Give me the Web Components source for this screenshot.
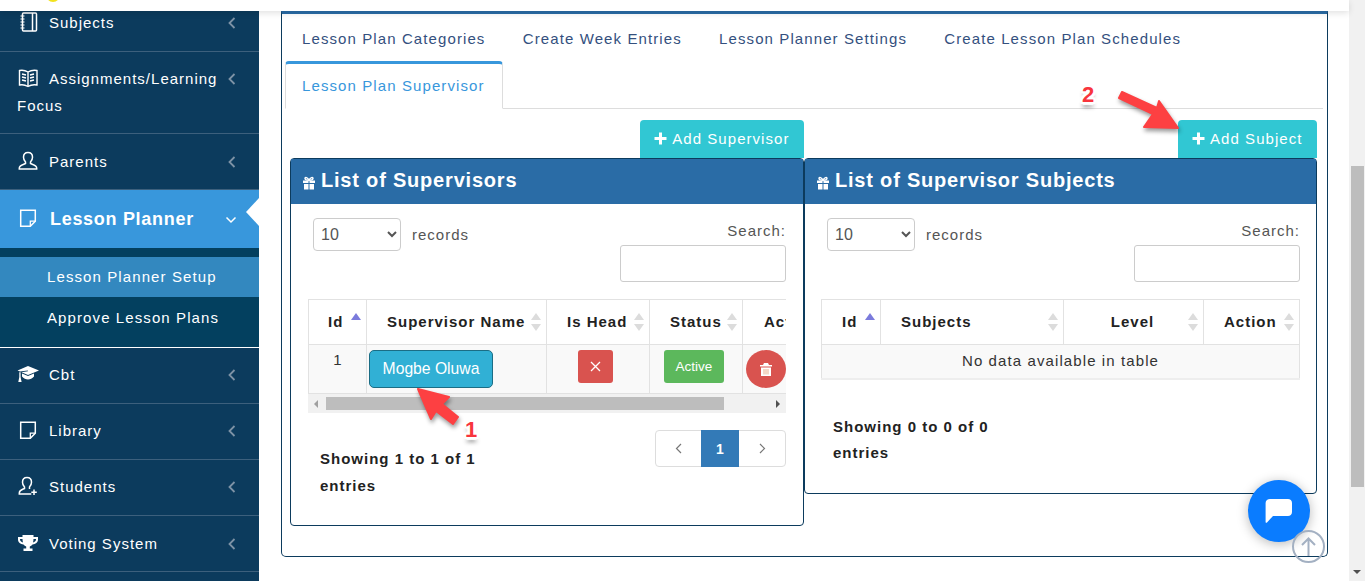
<!DOCTYPE html>
<html>
<head>
<meta charset="utf-8">
<title>Lesson Plan Supervisor</title>
<style>
    html, body { margin: 0; height: 581px; overflow: hidden; background: #fff; }
    body { font-family: "Liberation Sans", Arial, sans-serif; }
</style>
</head>
<body>
<lp-app>
    <side-bar slot="side">
        <side-item icon="notebook" first style="--pt: 13px; --pb: 15px">Subjects</side-item>
        <side-item icon="book" style="--pt: 13px">Assignments/Learning Focus</side-item>
        <side-item icon="user">Parents</side-item>
        <side-item icon="note" active>Lesson Planner</side-item>
        <side-sub>
            <a class="on">Lesson Planner Setup</a>
            <a>Approve Lesson Plans</a>
        </side-sub>
        <side-item icon="cap" style="--pt: 13px; --pb: 15px">Cbt</side-item>
        <side-item icon="note" style="--pt: 13px; --pb: 15px">Library</side-item>
        <side-item icon="useradd" style="--pt: 13px; --pb: 15px">Students</side-item>
        <side-item icon="trophy">Voting System</side-item>
    </side-bar>
    <plan-panel>
        <tab-strip slot="tabs"></tab-strip>
        <div slot="left">
            <add-button>Add Supervisor</add-button>
            <list-box heading="List of Supervisors">
                <dt-controls></dt-controls>
                <supervisor-table></supervisor-table>
                <table-footer info="Showing 1 to 1 of 1 entries" pager></table-footer>
            </list-box>
        </div>
        <div slot="right">
            <add-button>Add Subject</add-button>
            <list-box heading="List of Supervisor Subjects" narrow>
                <dt-controls style="--sel-left: 6px"></dt-controls>
                <subject-table></subject-table>
                <table-footer info="Showing 0 to 0 of 0 entries"></table-footer>
            </list-box>
        </div>
    </plan-panel>
</lp-app>

<script>
const ICONS = {
    notebook: `<svg width="22" height="20" viewBox="0 0 22 20" fill="none" stroke="#fff" stroke-width="1.5"><rect x="5.5" y="1" width="14" height="18" rx="1"/><path d="M15.500 1v18"/><path d="M3.500 4h4M3.500 7h4M3.500 10h4M3.500 13h4M3.500 16h4" stroke-width="1.2"/></svg>`,
    book: `<svg width="22" height="20" viewBox="0 0 22 20" fill="none" stroke="#fff" stroke-width="1.4"><path d="M11 4C8.500 2.500 5 2 2.500 2.500V17C5 16.500 8.500 17 11 18.500 13.500 17 17 16.500 20 17V2.500C17 2 13.500 2.500 11 4ZM11 4v14.500"/><path d="M5 6l4 1M5 9l4 1M5 12l4 1M13 7l4-1M13 10l4-1M13 13l4-1" stroke-width="1.300"/></svg>`,
    user: `<svg width="22" height="20" viewBox="0 0 22 20" fill="none" stroke="#fff" stroke-width="1.500"><path d="M11 1.500c-3 0-4.500 2.200-4.500 4.800 0 2.200 1 3.700 2 4.700v1.500c-2 1-6.200 1.600-6.200 4.500v1h17.400v-1c0-2.900-4.200-3.500-6.200-4.500V11c1-1 2-2.500 2-4.700 0-2.600-1.500-4.800-4.500-4.800z"/></svg>`,
    useradd: `<svg width="22" height="20" viewBox="0 0 22 20" fill="none" stroke="#fff" stroke-width="1.500"><path d="M10 1.500c-3 0-4.500 2.200-4.500 4.800 0 2.200 1 3.700 2 4.700v1.500c-2 1-5.200 1.600-5.200 4.500v1h12"/><path d="M10 1.500c3 0 4.500 2.200 4.500 4.800 0 2.200-1 3.700-2 4.700v2"/><path d="M17 13.500v5.500M14.300 16.300h5.500"/></svg>`,
    note: `<svg width="22" height="20" viewBox="0 0 22 20" fill="none" stroke="#fff" stroke-width="1.500"><path d="M3.700 2.200h14.600v11l-5 5H3.700z"/><path d="M18.300 13.200h-5v5" stroke-width="1.300"/></svg>`,
    cap: `<svg width="22" height="18" viewBox="0 0 22 18" fill="#fff"><path d="M11 1 22 5.500 11 10 4.500 7.300l6.500-1-.2-.9L3 6.500.5 5.500z"/><path d="M5 8.500v3c1.500 2 4 3 6 3s4.500-1 6-3v-3l-6 2.500z"/><path d="M2.300 7.200h1.300v4.800l1 5H1.300l1-5z"/></svg>`,
    trophy: `<svg width="22" height="18" viewBox="0 0 22 18" fill="#fff"><path d="M5.500 1h11v2H21v2.500c0 3-2.500 4.700-5.500 5-.8 1-1.700 1.600-2.700 1.900v2.100h2.700V17H6.500v-2.500h2.700v-2.100c-1-.3-1.900-.9-2.700-1.900C3.500 10.200 1 8.500 1 5.500V3h4.500zM3 5v.6c0 1.500 1.200 2.500 3 2.900C5.700 7.400 5.500 6.200 5.500 5zm13.500 0c0 1.200-.2 2.400-.5 3.500 1.800-.4 3-1.400 3-2.900V5z"/></svg>`
};

class SideBar extends HTMLElement {
    constructor() {
        super();
        this.attachShadow({ mode: 'open' }).innerHTML = `
        <style>
            :host { display: block; width: 259px; height: 100%; background: #0c3b5d; overflow: hidden; }
        </style>
        <slot></slot>`;
    }
}

class SideItem extends HTMLElement {
    constructor() {
        super();
        const active = this.hasAttribute('active');
        const chevron = active
            ? `<svg width="12" height="8" viewBox="0 0 12 8" fill="none" stroke="#fff" stroke-width="1.500"><path d="M1.500 1.500 6 6l4.500-4.500"/></svg>`
            : `<svg width="8" height="12" viewBox="0 0 8 12" fill="none" stroke="#7e93a6" stroke-width="1.800"><path d="M6.500 1 1.500 6l5 5"/></svg>`;
        this.attachShadow({ mode: 'open' }).innerHTML = `
        <style>
            :host {
                display: grid;
                grid-template-columns: 1fr 40px;
                padding: var(--pt, 14px) 0 var(--pb, 14px) 17px;
                border-bottom: 1px solid #3d607d;
                color: #fff;
                font-size: 15px;
                letter-spacing: 1px;
                line-height: 27px;
            }
            :host([first]) { margin-top: -15px; }
            :host([active]) {
                position: relative;
                background: #3897dc;
                border-bottom: 0;
                padding: 16px 0 15px 17px;
                font-size: 18px;
                font-weight: bold;
                letter-spacing: .7px;
            }
            :host([active]) .txt svg { margin-right: 11px; }
            .txt svg { vertical-align: middle; margin-right: 10px; position: relative; top: -2px; }
            .chev { display: flex; align-items: center; height: 27px; padding-left: 9px; }
            :host([active]) .chev { padding-left: 6px; }
            .notch {
                display: none;
                position: absolute;
                right: 0;
                top: 8px;
                border-style: solid;
                border-width: 14px 13px 14px 0;
                border-color: transparent #fff transparent transparent;
            }
            :host([active]) .notch { display: block; }
        </style>
        <div class="txt">${ICONS[this.getAttribute('icon')]}<slot></slot></div>
        <div class="chev">${chevron}</div>
        <div class="notch"></div>`;
    }
}

class SideSub extends HTMLElement {
    constructor() {
        super();
        this.attachShadow({ mode: 'open' }).innerHTML = `
        <style>
            :host {
                display: block;
                background: #03405f;
                padding: 9px 0 9px;
                border-bottom: 1px solid #fff;
                height: 81px;
            }
            ::slotted(a) {
                display: block;
                height: 40px;
                line-height: 40px;
                padding-left: 47px;
                color: #fff;
                font-size: 15px;
                letter-spacing: 1.100px;
            }
            ::slotted(a.on) { background: #3388bf; margin-bottom: 1px; }
        </style>
        <slot></slot>`;
    }
}

class LpApp extends HTMLElement {
    constructor() {
        super();
        this.attachShadow({ mode: 'open' }).innerHTML = `
        <style>
            :host { display: flex; position: relative; height: 581px; overflow: hidden; }
            .col { flex: 1; display: flex; flex-direction: column; min-width: 0; }
            .top {
                position: relative;
                z-index: 2;
                height: 11px;
                background: #fff;
                box-shadow: 0 2px 6px rgba(0, 0, 0, .12);
            }
            .top i {
                position: absolute;
                left: 46px;
                top: -12px;
                width: 14px;
                height: 14px;
                border-radius: 50%;
                background: #f2e21d;
            }
            .row { flex: 1; display: flex; min-height: 0; }
            .main { flex: 1; padding-left: 22px; min-width: 0; }
            .bar {
                width: 16px;
                background: #f1f1f1;
                padding-top: 166px;
                box-sizing: border-box;
                position: relative;
            }
            .thumb { width: 13px; height: 321px; margin-left: 2px; background: #bdbdbd; }
            .down {
                position: absolute;
                left: 4px;
                bottom: 7px;
                border-style: solid;
                border-width: 4px 4px 0;
                border-color: #505050 transparent transparent;
            }
            .chat {
                position: absolute;
                left: 1248px;
                top: 480px;
                width: 62px;
                height: 62px;
                border-radius: 50%;
                background: #0a7cff;
                box-shadow: 0 2px 12px rgba(0, 0, 0, .28);
                display: flex;
                align-items: center;
                justify-content: center;
                z-index: 3;
            }
            .up {
                position: absolute;
                left: 1292px;
                top: 530px;
                width: 33px;
                height: 33px;
                z-index: 4;
            }
            .mark { position: absolute; z-index: 5; left: 0; top: 0; pointer-events: none; }
            .num {
                position: absolute;
                z-index: 6;
                color: #f8353d;
                font-size: 22px;
                font-weight: bold;
                line-height: 22px;
                text-shadow: 2px 0 0 #fff, -2px 0 0 #fff, 0 2px 0 #fff, 0 -2px 0 #fff,
                    2px 2px 0 #fff, -2px 2px 0 #fff, 2px -2px 0 #fff, -2px -2px 0 #fff,
                    3px 0 1px #fff, -3px 0 1px #fff, 0 -3px 1px #fff, 0 3px 1px #fff,
                    0 5px 4px rgba(0, 0, 0, .45);
            }
        </style>
        <div class="col">
            <div class="top"><i></i></div>
            <div class="row">
                <slot name="side"></slot>
                <div class="main"><slot></slot></div>
            </div>
        </div>
        <div class="bar"><div class="thumb"></div><div class="down"></div></div>
        <svg class="mark" width="1365" height="581" viewBox="0 0 1365 581" style="filter:drop-shadow(1px 3px 2px rgba(0,0,0,.4))">
            <path d="M418 389 449 397 442 404 458 417 453 424 436 411 431 419z" fill="#fd4042" stroke="#fd4042" stroke-linejoin="round" stroke-width="2"/>
            <path d="M1178 128 1144 127 1153 114 1119 98 1122 92 1157 108 1159 101z" fill="#fd4042" stroke="#fd4042" stroke-linejoin="round" stroke-width="2"/>
        </svg>
        <span class="num" style="left:465px;top:419px">1</span>
        <span class="num" style="left:1082px;top:84px">2</span>
        <div class="chat">
            <svg width="28" height="26" viewBox="0 0 28 26" fill="#fff"><path d="M5 1h18c2.200 0 4 1.600 4 4v9c0 2.400-1.800 4-4 4H8l-6 6.500c-.6.600-1.400.2-1.400-.6V5C.6 2.600 2.800 1 5 1z"/></svg>
        </div>
        <svg class="up" viewBox="0 0 33 33" fill="none" stroke="#a3b0c2" stroke-width="2"><circle cx="16.500" cy="16.500" r="15.500"/><path d="M16.500 26V9M10 15l6.500-6.500L23 15"/></svg>`;
    }
}

class PlanPanel extends HTMLElement {
    constructor() {
        super();
        this.attachShadow({ mode: 'open' }).innerHTML = `
        <style>
            :host {
                display: block;
                width: 1047px;
                box-sizing: border-box;
                height: 546px;
                border: 1px solid #0c3b5d;
                border-top: 3px solid #2a6ca6;
                border-radius: 0 0 5px 5px;
            }
            .grid {
                display: grid;
                grid-template-columns: 514px 513px;
                margin: 11px 0 0 8px;
            }
            ::slotted(div) { display: flex; flex-direction: column; align-items: flex-end; }
        </style>
        <slot name="tabs"></slot>
        <div class="grid">
            <slot name="left"></slot>
            <slot name="right"></slot>
        </div>`;
    }
}

class TabStrip extends HTMLElement {
    constructor() {
        super();
        const names = ['Lesson Plan Categories', 'Create Week Entries', 'Lesson Planner Settings', 'Create Lesson Plan Schedules'];
        this.attachShadow({ mode: 'open' }).innerHTML = `
        <style>
            :host {
                display: flex;
                flex-wrap: wrap;
                margin: 0 4px 0 3px;
                border-bottom: 1px solid #ddd;
                font-size: 15px;
                letter-spacing: 1.100px;
                line-height: 20px;
            }
            a {
                display: block;
                box-sizing: border-box;
                height: 47px;
                padding: 12px 17px 0;
                margin-right: 3.300px;
                color: #34507e;
                border-top: 3px solid transparent;
            }
            a.on {
                height: 48px;
                margin-bottom: -1px;
                color: #3897dc;
                background: #fff;
                padding: 12px 17px 0 16px;
                border: 1px solid #ddd;
                border-top: 3px solid #3897dc;
                border-bottom-color: #fff;
                border-radius: 4px 4px 0 0;
            }
        </style>
        ${names.map(n => `<a>${n}</a>`).join('')}
        <a class="on">Lesson Plan Supervisor</a>`;
    }
}

class AddButton extends HTMLElement {
    constructor() {
        super();
        this.attachShadow({ mode: 'open' }).innerHTML = `
        <style>
            :host {
                display: inline-flex;
                align-items: center;
                box-sizing: border-box;
                height: 38px;
                padding: 0 14.500px 2px 14px;
                background: #31c7d3;
                color: #fff;
                border-radius: 4px 4px 0 0;
                font-size: 15px;
                letter-spacing: 1.050px;
            }
            svg { margin-right: 5px; }
        </style>
        <svg width="13" height="13" viewBox="0 0 13 13" fill="#fff"><path d="M5 .5h3V5h4.500v3H8v4.500H5V8H.5V5H5z"/></svg>
        <slot></slot>`;
    }
}

class ListBox extends HTMLElement {
    static get observedAttributes() { return ['heading']; }
    constructor() {
        super();
        this.attachShadow({ mode: 'open' }).innerHTML = `
        <style>
            :host {
                display: block;
                align-self: stretch;
                box-sizing: border-box;
                border: 1px solid #0c3b5d;
                border-radius: 4px;
            }
            header {
                display: flex;
                align-items: center;
                box-sizing: border-box;
                height: 45px;
                padding: 0 0 2px 11px;
                background: #2a6ca6;
                color: #fff;
                font-size: 20px;
                font-weight: bold;
                letter-spacing: .8px;
            }
            header svg { margin-right: 5px; position: relative; top: 2px; }
            .body { padding: 14px 17px 26px; }
            :host([narrow]) .body { padding: 14px 16px 26px; }
        </style>
        <header>
            <svg width="14" height="14" viewBox="0 0 14 14" fill="#fff"><path d="M1 4.500h5.500V7H1zM7.500 4.500H13V7H7.500zM2 8h4.500v5.500H2zM7.500 8H12v5.500H7.500z"/><path d="M7 4.200C5.500 1.200 3 .8 3 2.300 3 3.800 5.200 4.200 7 4.200c1.800 0 4-.4 4-1.900 0-1.500-2.500-1.100-4 1.900z" fill="none" stroke="#fff" stroke-width="1.400"/></svg>
            <span id="t"></span>
        </header>
        <div class="body"><slot></slot></div>`;
    }
    attributeChangedCallback(name, old, value) {
        this.shadowRoot.querySelector('#t').textContent = value;
    }
}

class DtControls extends HTMLElement {
    constructor() {
        super();
        this.attachShadow({ mode: 'open' }).innerHTML = `
        <style>
            :host {
                display: flex;
                justify-content: space-between;
                height: 64px;
                margin-bottom: 17px;
                color: #555;
                font-size: 15px;
                letter-spacing: 1px;
            }
            .len { display: flex; align-items: center; height: 33px; padding-left: var(--sel-left, 5px); }
            select {
                width: 88px;
                height: 33px;
                margin: 0 11px 0 0;
                padding-left: 3px;
                font: 16px "Liberation Sans", Arial, sans-serif;
                color: #555;
                background: #fff;
                border: 1px solid #ccc;
                border-radius: 4px;
            }
            .find { display: flex; flex-direction: column; align-items: flex-end; padding-top: 5px; line-height: 16px; }
            input {
                display: block;
                box-sizing: border-box;
                width: 166px;
                height: 37px;
                margin-top: 6px;
                border: 1px solid #ccc;
                border-radius: 3px;
                background: #fff;
            }
        </style>
        <div class="len"><select><option>10</option></select>records</div>
        <div class="find"><span>Search:</span><input></div>`;
    }
}

const TABLE_CSS = `
    table { border-collapse: collapse; table-layout: fixed; font-size: 15px; letter-spacing: 1px; color: #333; }
    th, td { border: 1px solid #e2e2e2; padding: 0; box-sizing: border-box; }
    th {
        position: relative;
        height: 45px;
        text-align: left;
        padding: 0 0 2px 20px;
        color: #222;
        white-space: nowrap;
        overflow: hidden;
    }
    th.mid { text-align: center; padding: 0 2px 2px 0; }
    th i {
        position: absolute;
        right: 5px;
        top: 13px;
        width: 10px;
        height: 18px;
    }
    th i::before, th i::after {
        content: '';
        position: absolute;
        left: 0;
        border-style: solid;
        border-color: transparent;
    }
    th i::before { top: 0; border-width: 0 5px 7px; border-bottom-color: #dcdcdc; }
    th i::after { bottom: 0; border-width: 7px 5px 0; border-top-color: #dcdcdc; }
    th i.asc::before { border-bottom-color: #7b7bdc; }
    th i.asc::after { display: none; }
    td { background: #f9f9f9; }
`;

class SupervisorTable extends HTMLElement {
    constructor() {
        super();
        this.attachShadow({ mode: 'open' }).innerHTML = `
        <style>
            :host { display: block; }
            .wrap { overflow: hidden; }
            ${TABLE_CSS}
            table { width: 534px; }
            th:first-child { padding-left: 19px; }
            th:last-child { padding-left: 21px; }
            td { height: 49px; vertical-align: top; padding-top: 5px; }
            td.n { text-align: center; padding-top: 7px; letter-spacing: 0; line-height: 16px; }
            .name {
                box-sizing: border-box;
                width: 124px;
                height: 38px;
                margin-left: 2px;
                display: flex;
                align-items: center;
                justify-content: center;
                background: #31b0d5;
                border: 1px solid #1b6d85;
                border-radius: 5px;
                color: #fff;
                font-size: 15.700px;
                letter-spacing: 0;
            }
            .x, .act {
                box-sizing: border-box;
                height: 33px;
                display: flex;
                align-items: center;
                justify-content: center;
                border-radius: 3px;
                color: #fff;
                letter-spacing: 0;
            }
            .x { width: 35px; margin-left: 31px; background: #d9534f; }
            .act { width: 60px; margin-left: 14px; background: #5cb85c; font-size: 13.500px; padding-bottom: 1px; }
            .del {
                width: 40px;
                height: 38px;
                margin-left: 3px;
                border-radius: 50%;
                background: #d9534f;
                display: flex;
                align-items: center;
                justify-content: center;
            }
            .bar {
                display: flex;
                align-items: center;
                height: 19px;
                background: #f1f1f1;
                position: relative;
            }
            .thumb { width: 398px; height: 13px; margin-left: 18px; background: #bdbdbd; }
            .l, .r { position: absolute; top: 6px; border-style: solid; border-color: transparent; }
            .l { left: 6px; border-width: 4px 4px 4px 0; border-right-color: #a0a0a0; }
            .r { right: 6px; border-width: 4px 0 4px 4px; border-left-color: #505050; }
        </style>
        <div class="wrap">
            <table>
                <colgroup><col style="width:58px"><col style="width:180px"><col style="width:103px"><col style="width:93px"><col style="width:100px"></colgroup>
                <tr>
                    <th>Id<i class="asc"></i></th>
                    <th>Supervisor Name<i></i></th>
                    <th>Is Head<i></i></th>
                    <th>Status<i></i></th>
                    <th>Action<i></i></th>
                </tr>
                <tr>
                    <td class="n">1</td>
                    <td><div class="name">Mogbe Oluwa</div></td>
                    <td><div class="x"><svg width="11" height="11" viewBox="0 0 11 11" stroke="#fff" stroke-width="1.300"><path d="M1 1l9 9M10 1l-9 9"/></svg></div></td>
                    <td><div class="act">Active</div></td>
                    <td><div class="del"><svg width="12" height="13" viewBox="0 0 12 13" fill="#fff"><path d="M4 0h4l1 2h3v1.500H0V2h3zM1 4.500h10V13H1z"/><path d="M4 6v5.500M6 6v5.500M8 6v5.500" stroke="#e9b18f" stroke-width="1"/></svg></div></td>
                </tr>
            </table>
        </div>
        <div class="bar"><span class="l"></span><div class="thumb"></div><span class="r"></span></div>`;
    }
}

class SubjectTable extends HTMLElement {
    constructor() {
        super();
        this.attachShadow({ mode: 'open' }).innerHTML = `
        <style>
            :host { display: block; }
            ${TABLE_CSS}
            table { width: 478px; border-bottom: 2px solid #eee; }
            td { height: 34px; text-align: center; letter-spacing: 1.100px; padding-bottom: 2px; }
        </style>
        <table>
            <colgroup><col style="width:59px"><col style="width:183px"><col style="width:140px"><col style="width:96px"></colgroup>
            <tr>
                <th>Id<i class="asc"></i></th>
                <th>Subjects<i></i></th>
                <th class="mid">Level<i></i></th>
                <th>Action<i></i></th>
            </tr>
            <tr><td colspan="4">No data available in table</td></tr>
        </table>`;
    }
}

class TableFooter extends HTMLElement {
    constructor() {
        super();
        const pager = this.hasAttribute('pager');
        this.attachShadow({ mode: 'open' }).innerHTML = `
        <style>
            :host { display: flex; justify-content: space-between; align-items: flex-start; }
            .info {
                width: 180px;
                padding: 33px 0 0 12px;
                color: #222;
                font-size: 15px;
                font-weight: bold;
                letter-spacing: 1px;
                line-height: 26.500px;
            }
            :host(:not([pager])) .info { padding-top: 34px; }
            .pg {
                display: flex;
                height: 37px;
                box-sizing: border-box;
                margin-top: 17px;
                border: 1px solid #ddd;
                border-radius: 4px;
            }
            .pg span { display: flex; align-items: center; justify-content: center; width: 46px; }
            .pg span:first-child { width: 45px; }
            .pg .cur { width: 38px; margin: -1px 0; background: #337ab7; color: #fff; font: bold 14px "Liberation Sans", Arial, sans-serif; }
        </style>
        <div class="info">${this.getAttribute('info')}</div>
        ${pager ? `<div class="pg">
            <span><svg width="8" height="11" viewBox="0 0 8 11" fill="none" stroke="#777" stroke-width="1.200"><path d="M6 1 1.500 5.500 6 10"/></svg></span>
            <span class="cur">1</span>
            <span><svg width="8" height="11" viewBox="0 0 8 11" fill="none" stroke="#777" stroke-width="1.200"><path d="M2 1l4.500 4.500L2 10"/></svg></span>
        </div>` : ''}`;
    }
}

customElements.define('side-bar', SideBar);
customElements.define('side-item', SideItem);
customElements.define('side-sub', SideSub);
customElements.define('lp-app', LpApp);
customElements.define('plan-panel', PlanPanel);
customElements.define('tab-strip', TabStrip);
customElements.define('add-button', AddButton);
customElements.define('list-box', ListBox);
customElements.define('dt-controls', DtControls);
customElements.define('supervisor-table', SupervisorTable);
customElements.define('subject-table', SubjectTable);
customElements.define('table-footer', TableFooter);
</script>
</body>
</html>
